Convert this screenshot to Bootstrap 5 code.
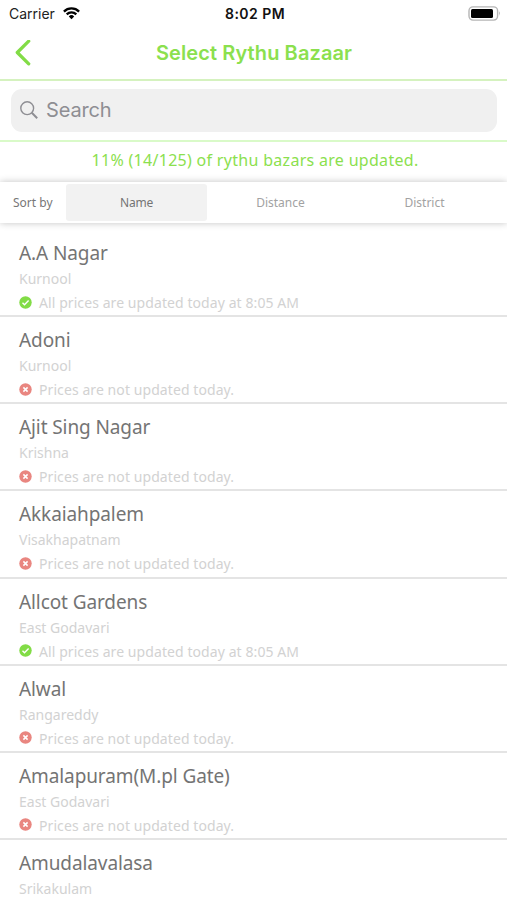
<!DOCTYPE html>
<html lang="en">
<head>
<meta charset="utf-8">
<meta name="viewport" content="width=device-width, initial-scale=1">
<title>Select Rythu Bazaar</title>
<link href="https://cdn.jsdelivr.net/npm/bootstrap@5.3.0/dist/css/bootstrap.min.css" rel="stylesheet">
<style>
  body { font-family: "Noto Sans", sans-serif; background: #fff; height: 900px; overflow: hidden; }
  .ios { font-family: Inter, sans-serif; }
  .status-bar { height: 27px; padding: 0 6px 0 9px; font-size: 14px; color: #222; line-height: 27px; }
  .status-bar .side { flex: 1 1 0; }
  .clock { font-weight: 600; letter-spacing: .45px; color: #111; }
  .title-bar { height: 54px; border-bottom: 2px solid #d5f2bf; padding: 0 14px 0 15px; }
  .title-bar .side { flex: 1 1 0; }
  .title-bar h1 { font-size: 20px; font-weight: 600; color: #8be04e; line-height: 50px; letter-spacing: .1px; }
  .search-wrap { height: 61px; padding: 8px 10px 8px 11px; border-bottom: 2px solid #d9fac8; }
  .search-box { height: 43px; border-radius: 11px; background: #f0f0f0; color: #8e8e93; font-size: 20px; padding: 0 0 2px 9px; }
  .query { letter-spacing: -.15px; }
  .summary { height: 40px; line-height: 37px; font-size: 16px; letter-spacing: .3px; color: #8be04e; padding-left: 3px; }
  .sort-bar { height: 41px; padding-left: 13px; box-shadow: 0 0 7px rgba(0,0,0,.24); font-size: 12px; color: #a2a2a2; position: relative; }
  .sort-label { width: 53px; color: #777; }
  .sort-tab { width: 141px; height: 37px; line-height: 37px; margin-right: 3px; border-radius: 3px; }
  .sort-tab.current { background: #f2f2f2; color: #747474; letter-spacing: -.2px; }
  .market-list { margin-top: 7px; }
  .market { height: 87.15px; padding: 11px 19px 0; border-bottom: 2px solid #e4e4e4; color: #d2d2d2; font-size: 14px; line-height: 24px; white-space: nowrap; }
  .market h2 { font-size: 19px; font-weight: 400; line-height: 24px; letter-spacing: -.1px; margin: 0 0 2px; color: #747474; }
  .state { gap: 7px; letter-spacing: .08px; }
  .state svg { margin-bottom: 2px; }
</style>
<script src="https://cdn.jsdelivr.net/npm/bootstrap@5.3.0/dist/js/bootstrap.bundle.min.js"></script>
</head>
<body>
<svg class="d-none" aria-hidden="true">
  <symbol id="ok" viewBox="0 0 13 13"><circle cx="6.5" cy="6.5" r="6.2" fill="#82dc46"/><path d="M3.5 6.8l2 2 4.1-4.2" fill="none" stroke="#fff" stroke-width="1.4"/></symbol>
  <symbol id="no" viewBox="0 0 13 13"><circle cx="6.5" cy="6.5" r="6.2" fill="#e98680"/><path d="M4.4 4.4l4.2 4.2M8.6 4.4L4.4 8.6" fill="none" stroke="#fff" stroke-width="1.5"/></symbol>
</svg>

<div class="status-bar ios d-flex align-items-center">
  <div class="side d-flex align-items-center gap-2"><span class="carrier">Carrier</span>
    <svg width="17" height="13" viewBox="0 0 17 13"><g fill="none" stroke="#000" stroke-width="2.3"><path d="M.9 4.6a10.8 10.8 0 0 1 15.2 0"/><path d="M3.7 7.4a6.8 6.8 0 0 1 9.6 0"/></g><path d="M5.8 9.4a3.9 3.9 0 0 1 5.4 0L8.5 12.2z"/></svg>
  </div>
  <span class="clock">8:02 PM</span>
  <div class="side d-flex justify-content-end">
    <svg width="33" height="15" viewBox="0 0 33 15"><rect x="1" y=".9" width="28.6" height="13.2" rx="4" fill="#fff" stroke="#b5b5b5" stroke-width="1.4"/><rect x="3" y="3" width="22" height="9" rx="1.5"/><path d="M31 5.3q1.7 2.2 0 4.4z" fill="#999"/></svg>
  </div>
</div>

<header class="title-bar ios d-flex align-items-center">
  <div class="side d-flex"><svg width="17" height="26" viewBox="0 0 17 26"><path d="M13.7 1.2L2.3 12.5 13.7 23.8" fill="none" stroke="#82dc46" stroke-width="3.3" stroke-linecap="round" stroke-linejoin="round"/></svg></div>
  <h1 class="m-0">Select Rythu Bazaar</h1>
  <div class="side"></div>
</header>

<div class="search-wrap">
  <div class="search-box ios d-flex align-items-center gap-2">
    <svg width="18" height="18" viewBox="0 0 18 18" fill="none" stroke="#8e8e93" stroke-width="1.4"><circle cx="7.2" cy="7.2" r="6.4"/><path d="M11.8 11.8L17.2 17.2" stroke-width="2"/></svg>
    <span class="query">Search</span>
  </div>
</div>

<div class="summary text-center"><span>11% (14/125) of rythu bazars are updated.</span></div>

<div class="sort-bar d-flex align-items-center bg-white">
  <span class="sort-label"><span>Sort by</span></span>
  <div class="sort-tab current text-center"><span>Name</span></div>
  <div class="sort-tab text-center"><span>Distance</span></div>
  <div class="sort-tab text-center"><span>District</span></div>
</div>

<main class="market-list">
  <section class="market"><h2><span>A.A Nagar</span></h2><div><span>Kurnool</span></div><div class="state d-flex align-items-center"><svg width="13" height="13"><use href="#ok"/></svg><span>All prices are updated today at 8:05 AM</span></div></section>
  <section class="market"><h2><span>Adoni</span></h2><div><span>Kurnool</span></div><div class="state d-flex align-items-center"><svg width="13" height="13"><use href="#no"/></svg><span>Prices are not updated today.</span></div></section>
  <section class="market"><h2><span>Ajit Sing Nagar</span></h2><div><span>Krishna</span></div><div class="state d-flex align-items-center"><svg width="13" height="13"><use href="#no"/></svg><span>Prices are not updated today.</span></div></section>
  <section class="market"><h2><span>Akkaiahpalem</span></h2><div><span>Visakhapatnam</span></div><div class="state d-flex align-items-center"><svg width="13" height="13"><use href="#no"/></svg><span>Prices are not updated today.</span></div></section>
  <section class="market"><h2><span>Allcot Gardens</span></h2><div><span>East Godavari</span></div><div class="state d-flex align-items-center"><svg width="13" height="13"><use href="#ok"/></svg><span>All prices are updated today at 8:05 AM</span></div></section>
  <section class="market"><h2><span>Alwal</span></h2><div><span>Rangareddy</span></div><div class="state d-flex align-items-center"><svg width="13" height="13"><use href="#no"/></svg><span>Prices are not updated today.</span></div></section>
  <section class="market"><h2><span>Amalapuram(M.pl Gate)</span></h2><div><span>East Godavari</span></div><div class="state d-flex align-items-center"><svg width="13" height="13"><use href="#no"/></svg><span>Prices are not updated today.</span></div></section>
  <section class="market"><h2><span>Amudalavalasa</span></h2><div><span>Srikakulam</span></div></section>
</main>
</body>
</html>
